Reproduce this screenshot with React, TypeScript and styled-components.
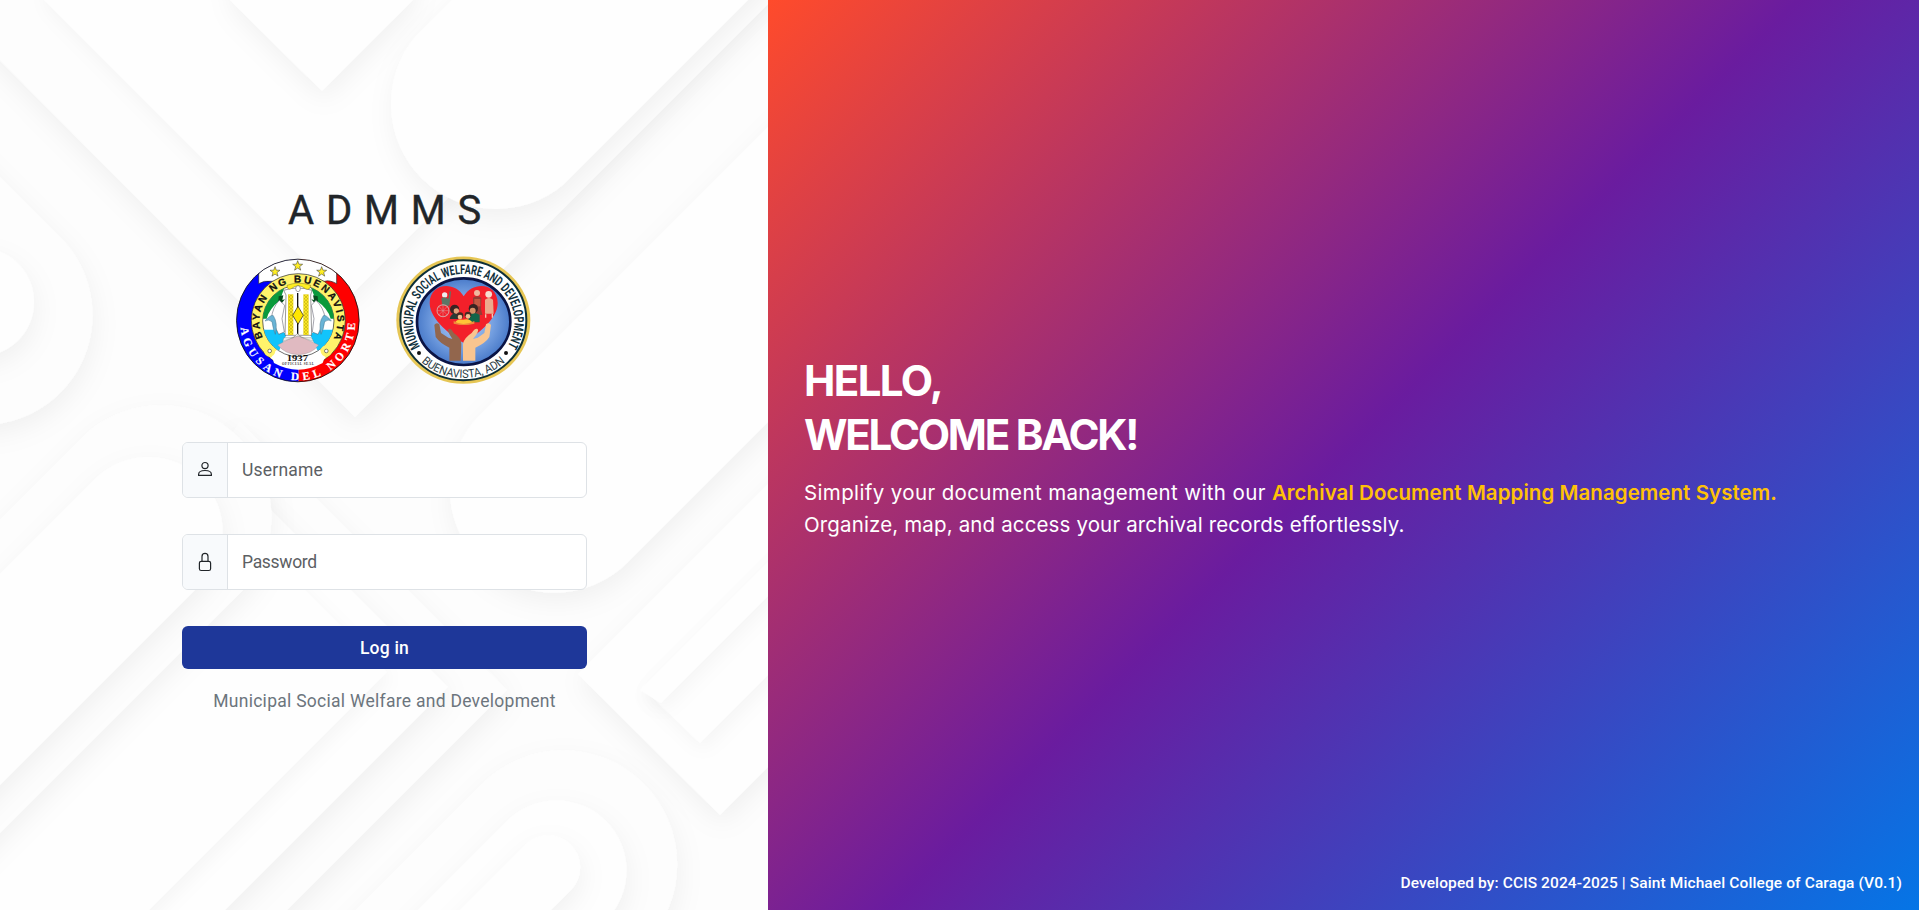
import React from 'react';
import styled, { createGlobalStyle } from 'styled-components';

const GlobalStyle = createGlobalStyle`
  *, *::before, *::after { box-sizing: border-box; }
  body { margin: 0; font-family: Roboto, 'Liberation Sans', sans-serif; overflow: hidden; }
`;

const Page = styled.div`
  display: grid;
  grid-template-columns: 768px 1fr;
  height: 100vh;
`;

const LoginPanel = styled.main`
  position: relative;
  display: flex;
  flex-direction: column;
  align-items: center;
  padding: 186px 0 0 1px;
  background: #fdfdfd;
  overflow: hidden;
`;

const Backdrop = styled.svg`
  position: absolute;
  inset: 0;
  width: 768px;
  height: 910px;
`;

const LoginForm = styled.form`
  position: relative;
  width: 405px;
  display: flex;
  flex-direction: column;
`;

const Title = styled.h1`
  margin: 0;
  padding-left: 12px;
  text-align: center;
  font-size: 40px;
  line-height: 49px;
  font-weight: 400;
  letter-spacing: 11.8px;
  -webkit-text-stroke: 0.4px #212529;
  color: #212529;
`;

const Seals = styled.div`
  display: flex;
  justify-content: center;
  align-items: center;
  gap: 35.5px;
  height: 129px;
  margin: 21px 0 57px -2px;

  svg { display: block; }
`;

const Field = styled.label`
  display: flex;
  height: 56px;
  margin-bottom: 36px;
  border: 1px solid #dee2e6;
  border-radius: 6px;
  background: #fff;
  overflow: hidden;
`;

const FieldIcon = styled.span`
  width: 45px;
  display: flex;
  align-items: center;
  justify-content: center;
  background: #f8fafc;
  border-right: 1px solid #dee2e6;
`;

const Input = styled.input<{ $tracking: string }>`
  flex: 1;
  min-width: 0;
  border: 0;
  outline: 0;
  padding: 0 14px;
  background: transparent;
  font-family: inherit;
  font-size: 17.5px;
  letter-spacing: ${(p) => p.$tracking};
  color: #212529;

  &::placeholder { color: #5c6064; opacity: 1; }
`;

const LoginButton = styled.button`
  height: 43px;
  border: 0;
  border-radius: 6px;
  padding: 0;
  background: #1e3799;
  color: #fff;
  font-family: inherit;
  font-size: 17.5px;
  font-weight: 500;
  letter-spacing: 0.2px;
`;

const Caption = styled.p`
  margin: 19px 0 0;
  text-align: center;
  font-size: 17.5px;
  line-height: 26px;
  letter-spacing: 0.27px;
  color: #6c757d;
`;

const WelcomePanel = styled.section`
  display: flex;
  flex-direction: column;
  justify-content: space-between;
  padding: 354px 17px 17px 36px;
  background: linear-gradient(135deg, #ff4b2b, #6a1c9f, #0575e6);
  color: #fff;
`;

const Heading = styled.h2`
  margin: 0 0 15px;
  font-family: Inter, sans-serif;
  font-size: 42px;
  line-height: 54px;
  font-weight: 700;
  letter-spacing: -2.25px;
`;

const HeadingLine = styled.span<{ $tracking?: string }>`
  display: block;
  letter-spacing: ${(p) => p.$tracking ?? 'inherit'};
`;

const Lead = styled.p`
  margin: 0;
  font-family: Inter, sans-serif;
  font-size: 20.5px;
  line-height: 32px;
  letter-spacing: 0.14px;
`;

const LeadStart = styled.span`
  letter-spacing: 0.37px;
`;

const Product = styled.strong`
  font-weight: 600;
  letter-spacing: 0.06px;
  color: #ffc107;
`;

const Credit = styled.footer`
  text-align: right;
  font-size: 15.5px;
  line-height: 20px;
  font-weight: 500;
  letter-spacing: 0.11px;
`;

const PatternBackdrop = () => (
  <Backdrop viewBox="0 0 768 910" aria-hidden="true">
    <defs>
      <filter id="soft" x="-20%" y="-20%" width="140%" height="150%">
        <feDropShadow dx="2" dy="9" stdDeviation="13" floodColor="#000" floodOpacity="0.05" />
      </filter>
      <filter id="crisp" x="-20%" y="-20%" width="140%" height="150%">
        <feDropShadow dx="3" dy="7" stdDeviation="9" floodColor="#000" floodOpacity="0.035" />
      </filter>
    </defs>
    <path d="M-60 0L355 417L780 -8V-60H-60Z" fill="#fdfdfd" filter="url(#soft)" />
    <path d="M44 0L345 301L646 0V-60H44Z" fill="#fefefe" filter="url(#crisp)" />
    <path d="M230 0L322 91L413 0V-60H230Z" fill="#fefefe" filter="url(#soft)" />
    <path d="M416 36L520-68H816L564 184A105 105 0 0 1 416 36Z" fill="#fefefe" filter="url(#soft)" />
    <path d="M-60 117L58 235A110 110 0 0 1 -20 425H-90Z" fill="#fdfdfd" filter="url(#soft)" />
    <circle cx="-20" cy="302" r="54" fill="#fefefe" filter="url(#soft)" />
    <circle cx="800" cy="233" r="77" fill="#fefefe" filter="url(#crisp)" />
    <path d="M578 674L900 352V635L720 815Z" fill="#fefefe" filter="url(#soft)" />
    <path d="M642 687L900 429V543L700 743Z" fill="#fefefe" filter="url(#crisp)" />
    <path d="M661 703L900 464V430L640 690Z" fill="#fefefe" filter="url(#crisp)" />
    <path d="M480 415L840 55V350L628 562A104 104 0 0 1 480 415Z" fill="#fefefe" filter="url(#soft)" />
    <path d="M240 422L406 588L507 690L260 937H-60V880Z" fill="#fdfdfd" filter="url(#soft)" />
    <path d="M200 439L448 687L198 937H-60V900Z" fill="#fefefe" filter="url(#soft)" />
    <path d="M160 445L387 672L122 937H-60V900Z" fill="#fefefe" filter="url(#crisp)" />
    <path d="M88 432A111 111 0 0 1 245 588L-60 893V580Z" fill="#fdfdfd" filter="url(#soft)" />
    <path d="M96 478A74 74 0 0 1 200 585L-60 845V634Z" fill="#fefefe" filter="url(#soft)" />
    <path d="M482 784A114 114 0 0 1 644 945L600 989H277Z" fill="#fdfdfd" filter="url(#soft)" />
    <path d="M507 821A70 70 0 0 1 606 920L540 986H342Z" fill="#fefefe" filter="url(#soft)" />
    <path d="M525 845A32 32 0 0 1 571 890L500 961H409Z" fill="#fefefe" filter="url(#soft)" />
  </Backdrop>
);

const Star = ({ x, y }: { x: number; y: number }) => (
  <path
    transform={`translate(${x} ${y})`}
    d="M0-15L3.8-4.5L15-4.2L6 2.8L9.2 13.5L0 7.2L-9.2 13.5L-6 2.8L-15-4.2L-3.8-4.5Z"
    fill="#ffee22"
    stroke="#333"
    strokeWidth="1.6"
  />
);

const TownSeal = () => (
  <svg width="124" height="125.3" viewBox="20 23 372 376" role="img" aria-label="Bayan ng Buenavista">
    <defs>
      <clipPath id="townDisc"><circle cx="205.5" cy="210.5" r="184" /></clipPath>
      <clipPath id="townCore"><circle cx="207" cy="212" r="107" /></clipPath>
      <path id="townTop" d="M101.5 264A117 117 0 1 1 312.5 264" />
      <path id="townBottom" d="M33.5 218A172 172 0 1 0 377.5 218" />
      <pattern id="weave" width="6" height="6" patternUnits="userSpaceOnUse">
        <rect width="6" height="6" fill="#f3d3d8" />
        <path d="M0 0L6 6M6 0L0 6" stroke="#b98a92" strokeWidth="1" />
      </pattern>
      <pattern id="braid" width="10" height="10" patternUnits="userSpaceOnUse">
        <rect width="10" height="10" fill="#ffee22" />
        <path d="M0 0L5 5L10 0M0 10L5 5L10 10" stroke="#a08a10" strokeWidth="1.3" fill="none" />
      </pattern>
    </defs>
    <g clipPath="url(#townDisc)">
      <rect x="20" y="23" width="188" height="376" fill="#0000fe" />
      <rect x="208" y="23" width="188" height="376" fill="#fe0000" />
      <path d="M88 20H322V100Q300 88 286 93H125Q104 90 88 100Z" fill="#fff" stroke="#222" strokeWidth="2" />
    </g>
    <circle cx="207" cy="211" r="141" fill="#fff36b" stroke="#222" strokeWidth="2" />
    <path d="M125 310Q206 250 290 310L280 338Q206 378 134 338Z" fill="#fff" />
    <circle cx="207" cy="212" r="107" fill="#fff" stroke="#222" strokeWidth="2" />
    <g clipPath="url(#townCore)">
      <path d="M95 205Q105 130 165 112L152 150Q120 175 112 205ZM318 205Q308 130 245 112L260 150Q296 175 304 205Z" fill="#0a9a3c" />
      <path d="M148 138l14-3-3 14 8-2-12 14-8-9ZM265 138l-14-3 3 14-8-2 12 14 8-9Z" fill="#064d1d" />
      <path d="M90 238H150L172 252L150 300H90Z M323 238H265L242 252L264 300H323Z" fill="#12c4fb" />
      <path d="M150 150Q130 170 126 205L148 252L165 245L158 205L166 165ZM260 150Q282 170 288 205L266 252L249 245L254 205L246 165Z" fill="#fff" stroke="#556" strokeWidth="1.6" />
      <path d="M107 212Q124 192 132 196Q146 218 138 252Q132 240 128 214Q118 206 107 212ZM306 212Q290 192 282 196Q266 218 275 252Q282 240 286 214Q296 206 306 212Z" fill="#69b4d6" stroke="#3d7690" strokeWidth="1.5" />
    </g>
    <path d="M163 120Q206 106 248 120L244 134L247 255H167L170 134Z" fill="#fff" stroke="#555" strokeWidth="1.8" />
    <rect x="176" y="132" width="16" height="122" fill="url(#braid)" />
    <rect x="222" y="132" width="16" height="122" fill="url(#braid)" />
    <path d="M173 105Q207 92 244 105Q242 122 228 115Q207 98 186 115Q174 121 173 105Z" fill="#ffee22" stroke="#77701a" strokeWidth="1.4" />
    <path d="M205 128V255" stroke="#111" strokeWidth="4" />
    <path d="M206 168L222 195L206 222L190 195Z" fill="#ffe600" stroke="#111" strokeWidth="2" />
    <ellipse cx="206" cy="115" rx="7" ry="9" fill="#fff" stroke="#555" strokeWidth="1.6" />
    <path d="M145 284L204 254L268 284Q248 312 207 313Q167 312 145 284Z" fill="url(#weave)" stroke="#888" />
    <path d="M164 262H192L204 250L217 262H246L252 273L206 257L160 273Z" fill="#eee" stroke="#777" strokeWidth="1.2" />
    <circle cx="121" cy="302" r="17" fill="#fff36b" />
    <circle cx="291" cy="302" r="17" fill="#fff36b" />
    <circle cx="121" cy="302" r="5.5" fill="#fff" stroke="#444" strokeWidth="2" />
    <circle cx="291" cy="302" r="5.5" fill="#fff" stroke="#444" strokeWidth="2" />
    <path d="M133 318Q206 366 280 318L290 322Q206 384 122 322Z" fill="#fff" />
    <Star x={137} y={64} />
    <Star x={205} y={46} />
    <Star x={277} y={64} />
    <circle cx="205.5" cy="210.5" r="184" fill="none" stroke="#111" strokeWidth="2.5" />
    <text fontFamily="Liberation Sans, sans-serif" fontWeight="700" fontSize="30" fill="#111" stroke="#111" strokeWidth="0.8">
      <textPath href="#townTop" startOffset="2" textLength="470" lengthAdjust="spacing">BAYAN NG BUENAVISTA</textPath>
    </text>
    <text fontFamily="Liberation Serif, serif" fontWeight="700" fontSize="34" fill="#fff" stroke="#fff" strokeWidth="0.5">
      <textPath href="#townBottom" startOffset="14" textLength="526" lengthAdjust="spacing">AGUSAN DEL NORTE</textPath>
    </text>
    <text x="204" y="333" textAnchor="middle" fontFamily="Liberation Serif, serif" fontWeight="700" fontSize="26" textLength="64" lengthAdjust="spacingAndGlyphs" fill="#111">1937</text>
    <text x="206" y="344" textAnchor="middle" fontFamily="Liberation Serif, serif" fontWeight="700" fontSize="10" textLength="96" fill="#333">OFFICIAL SEAL</text>
  </svg>
);

const WelfareSeal = () => (
  <svg width="134.7" height="128.7" viewBox="19 17 404 386" role="img" aria-label="Municipal Social Welfare and Development">
    <defs>
      <radialGradient id="sky">
        <stop offset="0" stopColor="#b9d2f6" />
        <stop offset="0.65" stopColor="#749fe0" />
        <stop offset="1" stopColor="#4a7bca" />
      </radialGradient>
      <path id="welfareTop" d="M93 291A152 144 0 1 1 351 291" />
      <path id="welfareBottom" d="M89 329A180 168 0 0 0 353 329" />
    </defs>
    <ellipse cx="221" cy="209.5" rx="201" ry="191" fill="#e6c655" />
    <ellipse cx="221" cy="209.5" rx="189" ry="180" fill="#fff" stroke="#0d2f38" strokeWidth="6" />
    <ellipse cx="222" cy="214" rx="140" ry="130" fill="url(#sky)" stroke="#0a1445" strokeWidth="8" />
    <path d="M221 277C190 258 120 210 120 158C120 98 195 90 222 138C250 90 324 98 324 158C324 210 254 258 221 277Z" fill="#f3202a" />
    <path d="M134 224Q140 214 149 222L154 248L176 262L188 266Q172 242 176 236Q184 232 192 248Q214 262 215 280L213 331H179V292Q150 278 138 260Z" fill="#92664d" />
    <path d="M304 224Q298 214 289 222L284 248L264 262L250 266Q270 242 264 236Q256 232 246 248Q224 262 220 280V331H257V292Q288 278 299 260Z" fill="#f9c590" />
    <circle cx="165" cy="134" r="8" fill="#eee" />
    <path d="M155 144Q166 136 176 146L180 122L184 124L179 166H158Z" fill="#5d7666" />
    <circle cx="160" cy="181" r="18" fill="none" stroke="#d9a0a0" strokeWidth="3" />
    <path d="M160 163V199M142 181H178M147 168L173 194M173 168L147 194" stroke="#d9a0a0" strokeWidth="1.5" />
    <circle cx="262" cy="128" r="9" fill="#efb9a0" />
    <path d="M250 142Q262 134 275 142L274 176L278 194H250Z" fill="#953c35" />
    <path d="M254 146H272V168H254Z" fill="#c35a43" />
    <circle cx="297" cy="132" r="10" fill="#f6ddcf" />
    <path d="M286 148Q298 138 310 148L312 190H286Z" fill="#eca98d" />
    <path d="M288 192V202M308 190V202" stroke="#f2c9b4" strokeWidth="4" />
    <circle cx="195" cy="177" r="14" fill="#3a2323" />
    <path d="M180 206Q184 186 202 190L206 206Z" fill="#283a36" />
    <circle cx="251" cy="175" r="14" fill="#382321" />
    <path d="M236 194Q254 182 270 194V216H236Z" fill="#12654a" />
    <circle cx="249" cy="181" r="9" fill="#d99267" />
    <circle cx="200" cy="182" r="8" fill="#e3a079" />
    <circle cx="211" cy="196" r="10" fill="#432a23" />
    <circle cx="235" cy="194" r="10" fill="#432a23" />
    <circle cx="211" cy="200" r="7" fill="#f2bd91" />
    <circle cx="235" cy="198" r="7" fill="#f2bd91" />
    <path d="M196 218Q200 204 220 208Q240 202 250 218Q222 228 196 218Z" fill="#ffc537" />
    <path d="M192 212Q220 230 254 212V220Q222 228 192 220Z" fill="#ee8b3a" />
    <circle cx="88" cy="308" r="6" fill="#111" />
    <circle cx="349" cy="308" r="6" fill="#111" />
    <text fontFamily="Roboto, sans-serif" fontWeight="700" fontSize="40" fill="#10303c">
      <textPath href="#welfareTop" startOffset="3" textLength="618" lengthAdjust="spacingAndGlyphs">MUNICIPAL SOCIAL WELFARE AND DEVELOPMENT</textPath>
    </text>
    <text fontFamily="'Liberation Sans Narrow', Roboto, sans-serif" fontWeight="400" fontSize="35" fill="#2c3c44">
      <textPath href="#welfareBottom" startOffset="8" textLength="276" lengthAdjust="spacingAndGlyphs">BUENAVISTA, ADN</textPath>
    </text>
  </svg>
);

const UserIcon = () => (
  <svg width="16" height="18" viewBox="0 0 16 18" fill="none" stroke="#212529" strokeWidth="1.2">
    <circle cx="8" cy="4.6" r="3.1" />
    <path d="M1.6 14.4V13.4C1.6 11 4.4 9.5 8 9.5S14.4 11 14.4 13.4V14.4Z" strokeLinejoin="round" />
  </svg>
);

const LockIcon = () => (
  <svg width="14" height="20" viewBox="0 0 14 20" fill="none" stroke="#212529" strokeWidth="1.2">
    <path d="M4 9.3V4.4A3 3 0 0 1 10 4.4V9.3" />
    <rect x="1.4" y="9.3" width="11.2" height="9.2" rx="1.8" />
  </svg>
);

export default function App() {
  return (
    <>
      <GlobalStyle />
      <Page>
        <LoginPanel>
          <PatternBackdrop />
          <LoginForm onSubmit={(e) => e.preventDefault()}>
            <Title>ADMMS</Title>
            <Seals>
              <TownSeal />
              <WelfareSeal />
            </Seals>
            <Field>
              <FieldIcon><UserIcon /></FieldIcon>
              <Input $tracking="0.2px" placeholder="Username" />
            </Field>
            <Field>
              <FieldIcon><LockIcon /></FieldIcon>
              <Input $tracking="-0.3px" type="password" placeholder="Password" />
            </Field>
            <LoginButton type="submit">Log in</LoginButton>
            <Caption>Municipal Social Welfare and Development</Caption>
          </LoginForm>
        </LoginPanel>
        <WelcomePanel>
          <div>
            <Heading>
              <HeadingLine $tracking="-1.6px">HELLO,</HeadingLine>
              <HeadingLine>WELCOME BACK!</HeadingLine>
            </Heading>
            <Lead>
              <LeadStart>Simplify your document management with our </LeadStart>
              <Product>Archival Document Mapping Management System.</Product>
              <br />
              Organize, map, and access your archival records effortlessly.
            </Lead>
          </div>
          <Credit>Developed by: CCIS 2024-2025 | Saint Michael College of Caraga (V0.1)</Credit>
        </WelcomePanel>
      </Page>
    </>
  );
}
